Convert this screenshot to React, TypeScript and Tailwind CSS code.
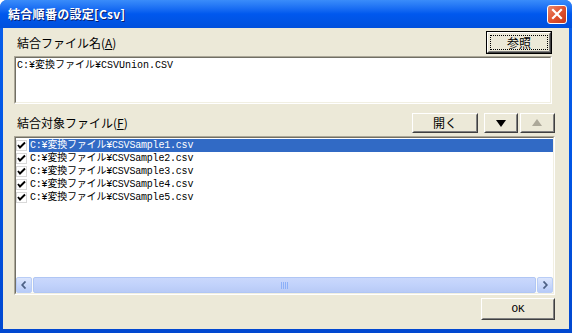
import React from "react";

const F = { fontFamily: '"Noto Sans CJK JP", "Noto Sans", sans-serif' } as React.CSSProperties;
const MONO = { fontFamily: '"Liberation Mono", "Noto Sans CJK JP", monospace' } as React.CSSProperties;

function Btn({ children, className = "", def = false }: { children: React.ReactNode; className?: string; def?: boolean }) {
  if (def) {
    return (
      <div className={"border border-black " + className}>
        <div className="w-full h-full border border-t-white border-l-white border-r-[#404040] border-b-[#404040]">
          <div className="w-full h-full border border-t-[#ECE9D8] border-l-[#ECE9D8] border-r-[#808080] border-b-[#808080] bg-[#ECE9D8] p-[1px]">
            <div className="w-full h-full border border-dotted border-black flex items-center justify-center text-[12px] text-black">
              {children}
            </div>
          </div>
        </div>
      </div>
    );
  }
  return (
    <div className={"border border-t-white border-l-white border-r-[#404040] border-b-[#404040] " + className}>
      <div className="w-full h-full border border-t-[#ECE9D8] border-l-[#ECE9D8] border-r-[#808080] border-b-[#808080] bg-[#ECE9D8] flex items-center justify-center text-[12px] text-black">
        {children}
      </div>
    </div>
  );
}

function Check() {
  return (
    <div className="w-[11px] h-[11px] bg-white border border-[#D8D8D8] flex items-center justify-center shrink-0">
      <svg width="9" height="9" viewBox="0 0 9 9">
        <path d="M1 4 L3 6.5 L8 1.5" stroke="#000" strokeWidth="1.9" fill="none" />
      </svg>
    </div>
  );
}

const files = [1, 2, 3, 4, 5].map((n) => `C:¥変換ファイル¥CSVSample${n}.csv`);

export default function App() {
  return (
    <div style={F} className="w-[572px] h-[333px] rounded-t-[7px] bg-gradient-to-b from-[#0A5FEA] via-[#0055E5] to-[#0148D0] flex flex-col overflow-hidden">
      {/* title bar */}
      <div className="h-[28px] shrink-0 flex items-center bg-gradient-to-b from-[#3A8CFA] via-[#0058EE] to-[#0050DC]">
        <span className="ml-[8px] text-white font-bold text-[12px] [text-shadow:1px_1px_0_#0A1E6E] tracking-[0.3px]">結合順番の設定[Csv]</span>
        <div className="ml-auto mr-[5px] w-[20px] h-[19px] rounded-[3px] border border-white bg-gradient-to-br from-[#E8876A] via-[#E0522F] to-[#C6381A] flex items-center justify-center">
          <svg width="12" height="12" viewBox="0 0 12 12">
            <path d="M2 2 L10 10 M10 2 L2 10" stroke="white" strokeWidth="2.2" strokeLinecap="square" />
          </svg>
        </div>
      </div>
      {/* body */}
      <div className="flex-1 mx-[3px] mb-[4px] bg-[#ECE9D8] flex flex-col pl-[11px] pt-[3px]">
        <div className="flex items-center mr-[17px]">
          <span className="text-[12px] text-black ml-[3px] mt-[1px]">
            結合ファイル名(<span className="underline">A</span>)
          </span>
          <Btn def className="ml-auto w-[66px] h-[23px]">参照</Btn>
        </div>
        <div className="mt-[2px] mr-[17px] h-[48px] border border-t-[#ACA899] border-l-[#ACA899] border-r-white border-b-white">
          <div className="w-full h-full border border-t-[#716F64] border-l-[#716F64] border-r-[#F1EFE2] border-b-[#F1EFE2] bg-white">
            <div style={MONO} className="text-[10px] leading-[13px] pl-[1px] pt-[1px] text-black">C:¥変換ファイル¥CSVUnion.CSV</div>
          </div>
        </div>
        <div className="flex items-end mt-[9px] mr-[14px]">
          <span className="text-[12px] text-black ml-[3px] mb-[1px]">
            結合対象ファイル(<span className="underline">F</span>)
          </span>
          <Btn className="ml-auto w-[66px] h-[20px]">開く</Btn>
          <Btn className="ml-[6px] w-[34px] h-[20px]">
            <svg width="10" height="7" viewBox="0 0 10 7"><path d="M0 0 H10 L5 7 Z" fill="#000" /></svg>
          </Btn>
          <Btn className="ml-[2px] w-[35px] h-[20px]">
            <svg width="11" height="8" viewBox="0 0 11 8"><path d="M0 7 H10 L5 0 Z" fill="#ACA899" /></svg>
          </Btn>
        </div>
        <div className="mt-[3px] mr-[14px] h-[159px] border border-t-[#ACA899] border-l-[#ACA899] border-r-white border-b-white">
          <div className="w-full h-full border border-t-[#716F64] border-l-[#716F64] border-r-[#F1EFE2] border-b-[#F1EFE2] bg-white flex flex-col">
            <div className="flex-1 pt-[1px]">
              {files.map((f, i) => (
                <div key={i} className="h-[13px] flex items-center">
                  <Check />
                  <div
                    style={MONO}
                    className={
                      "ml-[2px] flex-1 h-[13px] text-[10px] leading-[13px] pl-[1px] tracking-[-0.2px] " +
                      (i === 0 ? "bg-[#316AC5] text-white" : "text-black")
                    }
                  >
                    {f}
                  </div>
                </div>
              ))}
            </div>
            {/* horizontal scrollbar */}
            <div className="h-[16px] flex bg-[#FCFCF8]">
              <div className="w-[16px] h-[16px] rounded-[2px] border border-[#B9CDF6] bg-gradient-to-b from-[#DCE6FD] to-[#B7CBF8] flex items-center justify-center">
                <svg width="6" height="8" viewBox="0 0 6 8"><path d="M4.5 0.5 L1.2 4 L4.5 7.5" stroke="#4D6185" strokeWidth="1.8" fill="none" /></svg>
              </div>
              <div className="flex-1 mx-[1px] rounded-[2px] border border-[#B0C6F4] bg-gradient-to-b from-[#CAD8FC] via-[#C1D2FB] to-[#B8CAF6] flex items-center justify-center">
                <div className="flex gap-[1px]">
                  {[0, 1, 2, 3].map((k) => (
                    <div key={k} className="w-[1px] h-[7px] bg-[#EEF3FE] border-r border-[#8CB0F8]" />
                  ))}
                </div>
              </div>
              <div className="w-[16px] h-[16px] rounded-[2px] border border-[#B9CDF6] bg-gradient-to-b from-[#DCE6FD] to-[#B7CBF8] flex items-center justify-center">
                <svg width="6" height="8" viewBox="0 0 6 8"><path d="M1.5 0.5 L4.8 4 L1.5 7.5" stroke="#4D6185" strokeWidth="1.8" fill="none" /></svg>
              </div>
            </div>
          </div>
        </div>
        <div className="mt-[3px] mr-[14px] self-end">
          <Btn className="w-[74px] h-[22px]">
            <span style={MONO} className="text-[11px]">OK</span>
          </Btn>
        </div>
      </div>
    </div>
  );
}
